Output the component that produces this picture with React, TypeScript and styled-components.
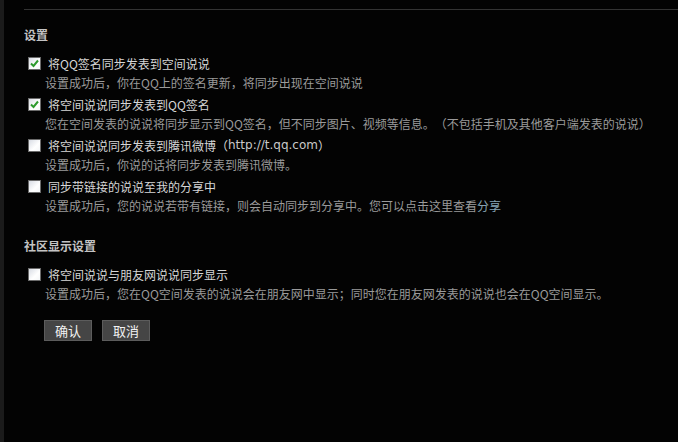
import React from "react";
import styled, { createGlobalStyle } from "styled-components";

const Global = createGlobalStyle`
  html, body { margin: 0; padding: 0; background: #030303; }
  body {
    font-family: "Noto Sans CJK SC", "Liberation Sans", sans-serif;
    font-size: 12px;
    text-spacing-trim: space-all;
  }
`;

const Page = styled.div`
  display: flex;
  min-height: 442px;
  background: #030303;
`;

const Strip = styled.div`
  width: 4px;
  flex: none;
  background: #1b1b1b;
`;

const Main = styled.div`
  flex: 1;
  padding-left: 20px;
  padding-top: 9px;
`;

const Rule = styled.div`
  height: 1px;
  background: #333;
`;

const Section = styled.section<{ $top: number }>`
  margin-top: ${(p) => p.$top}px;
`;

const Heading = styled.h3`
  margin: 0 0 8px 0;
  font-size: 12px;
  line-height: 20px;
  font-weight: bold;
  color: #c4c4c4;
`;

const Item = styled.div`
  display: flex;
  flex-direction: column;
`;

const Row = styled.label`
  display: flex;
  align-items: center;
  height: 20px;
  padding-left: 4px;
  color: #d6d6d6;
  font-size: 12px;
`;

const Box = styled.span<{ $checked: boolean }>`
  width: 11px;
  height: 11px;
  flex: none;
  border: 1px solid #6a6a6a;
  background: linear-gradient(135deg, #d8dce4 0%, #ffffff 60%, #f4f6f8 100%);
  margin-right: 7px;
  display: flex;
  align-items: center;
  justify-content: center;
`;

const Url = styled.span`
  font-family: "DejaVu Sans", "Liberation Sans", sans-serif;
  font-size: 12px;
  color: #c8c8c8;
`;

const Desc = styled.div`
  padding-left: 21px;
  height: 21px;
  line-height: 20px;
  color: #9a9a9a;
  font-size: 12px;
  white-space: nowrap;
`;

const Link = styled.a`
  color: #86a3b3;
  text-decoration: none;
`;

const Buttons = styled.div`
  display: flex;
  gap: 10px;
  padding-left: 20px;
  margin-top: 15px;
`;

const Btn = styled.button`
  width: 48px;
  height: 21px;
  padding: 0;
  border: 1px solid #5c5c5c;
  background: #454545;
  color: #f2f2f2;
  font-family: "Noto Sans CJK SC", sans-serif;
  font-size: 13px;
  line-height: 19px;
`;

const Check = () => (
  <svg width="9" height="9" viewBox="0 0 9 9">
    <path d="M1 4.5 L3.5 7 L8 1.5" fill="none" stroke="#2e9a2e" strokeWidth="2" />
  </svg>
);

type Opt = { label: React.ReactNode; desc: React.ReactNode; checked: boolean };

const Option = ({ label, desc, checked }: Opt) => (
  <Item>
    <Row>
      <Box $checked={checked}>{checked && <Check />}</Box>
      {label}
    </Row>
    <Desc>{desc}</Desc>
  </Item>
);

export default function App() {
  return (
    <>
      <Global />
      <Page>
        <Strip />
        <Main>
          <Rule />
          <Section $top={15}>
            <Heading>设置</Heading>
            <Option
              checked
              label="将QQ签名同步发表到空间说说"
              desc="设置成功后，你在QQ上的签名更新，将同步出现在空间说说"
            />
            <Option
              checked
              label="将空间说说同步发表到QQ签名"
              desc="您在空间发表的说说将同步显示到QQ签名，但不同步图片、视频等信息。（不包括手机及其他客户端发表的说说）"
            />
            <Option
              checked={false}
              label={
                <>
                  将空间说说同步发表到腾讯微博（<Url>http://t.qq.com</Url>）
                </>
              }
              desc="设置成功后，你说的话将同步发表到腾讯微博。"
            />
            <Option
              checked={false}
              label="同步带链接的说说至我的分享中"
              desc={
                <>
                  设置成功后，您的说说若带有链接，则会自动同步到分享中。您可以点击这里查看<Link href="#">分享</Link>
                </>
              }
            />
          </Section>
          <Section $top={19}>
            <Heading>社区显示设置</Heading>
            <Option
              checked={false}
              label="将空间说说与朋友网说说同步显示"
              desc="设置成功后，您在QQ空间发表的说说会在朋友网中显示；同时您在朋友网发表的说说也会在QQ空间显示。"
            />
          </Section>
          <Buttons>
            <Btn>确认</Btn>
            <Btn>取消</Btn>
          </Buttons>
        </Main>
      </Page>
    </>
  );
}
